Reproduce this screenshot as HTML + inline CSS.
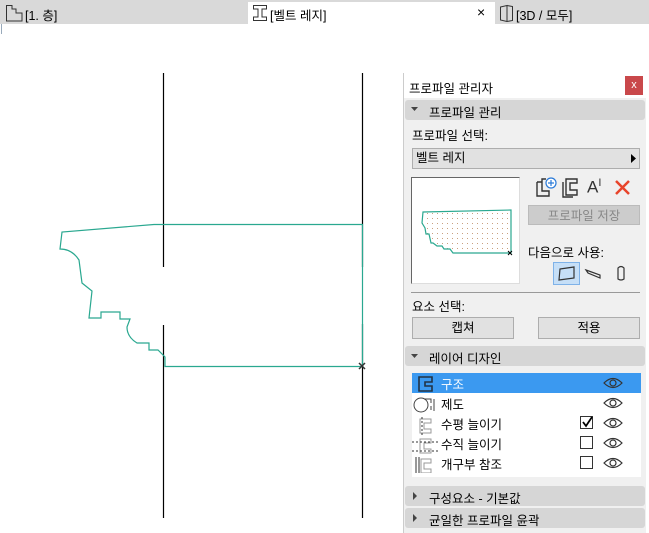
<!DOCTYPE html>
<html><head><meta charset="utf-8"><style>
*{margin:0;padding:0;box-sizing:border-box}
body{width:649px;height:533px;background:#fff;position:relative;overflow:hidden;font-family:"Liberation Sans","Noto Sans CJK KR",sans-serif;font-size:12.5px;color:#000}
.a{position:absolute}
.hdr{position:absolute;left:405px;width:240px;height:20px;background:#d6d6d6;border-radius:3px}
.hdr span{position:absolute;left:24px;top:2px}
.btn{position:absolute;background:#e1e1e1;border:1px solid #adadad;text-align:center;line-height:20px}
.row{position:absolute;left:412px;width:229px;height:20px}
.row span{position:absolute;left:29px;top:1px}
.cb{position:absolute;left:580px;width:13px;height:13px;border:1px solid #333;background:#fff}
</style></head><body>
<!-- tab bar -->
<div class="a" style="left:0;top:0;width:649px;height:24px;background:#d9d9d9"></div>
<div class="a" style="left:1px;top:24px;width:1px;height:10px;background:#9ab"></div>
<div class="a" style="left:248px;top:2px;width:247px;height:22px;background:#fff"></div>
<svg class="a" style="left:5px;top:4px" width="18" height="18"><path d="M1.5 1.5V17H17V9H11V5H7V1.5Z" fill="none" stroke="#333"/></svg>
<div class="a" style="left:25px;top:5px">[1. 층]</div>
<svg class="a" style="left:252px;top:4px" width="16" height="18"><path d="M1.5 1.5H14.5V5H10V13H14.5V16.5H1.5V13H6V5H1.5Z" fill="none" stroke="#333"/></svg>
<div class="a" style="left:270px;top:5px">[벨트 레지]</div>
<div class="a" style="left:477px;top:4px;font-size:14px">×</div>
<svg class="a" style="left:499px;top:4px" width="16" height="18"><path d="M1.5 3L8 1.5V17.5L1.5 16Z M8 1.5L13.5 2.5V16.5L8 17.5" fill="none" stroke="#333"/></svg>
<div class="a" style="left:516px;top:5px">[3D / 모두]</div>

<!-- drawing -->
<svg class="a" style="left:0;top:0" width="400" height="533">
<path d="M163.5 73V267M163.5 325V518M362.5 73V267M362.5 324V518" stroke="#000" stroke-width="1.2"/>
<path d="M163 224.5H362.5V366.5H165V357L158 350H149V343H137Q127 337 127 327L130 319H120V312H101V318H89L92 291L82 283L79 260Q72 249 60 249L62 232L154 224.5H163" fill="none" stroke="#2aa890" stroke-width="1.2"/>
<path d="M359 363l6 6M365 363l-6 6" stroke="#333" stroke-width="1.5"/>
</svg>

<!-- panel -->
<div class="a" style="left:403px;top:73px;width:243px;height:460px;background:#f0f0f0;border-left:1px solid #ccc"></div>
<div class="a" style="left:404px;top:73px;width:242px;height:25px;background:#fff"></div>
<div class="a" style="left:409px;top:78px">프로파일 관리자</div>
<div class="a" style="left:625px;top:76px;width:18px;height:19px;background:#c9484b;color:#fff;text-align:center;font-size:11px;line-height:18px">x</div>

<div class="hdr" style="top:100px"><span>프로파일 관리</span></div>
<svg class="a" style="left:411px;top:107px" width="8" height="6"><path d="M0 0H7L3.5 4Z" fill="#444"/></svg>
<div class="a" style="left:412px;top:125px">프로파일 선택:</div>
<div class="btn" style="left:412px;top:148px;width:228px;height:21px;text-align:left;padding-left:3px;line-height:18px">벨트 레지</div>
<svg class="a" style="left:631px;top:154px" width="6" height="9"><path d="M0 0L5 4.5L0 9Z" fill="#000"/></svg>

<div class="a" style="left:411px;top:177px;width:109px;height:107px;background:#fff;border:1px solid #666;border-right-color:#ddd;border-bottom-color:#ddd"></div>
<svg class="a" style="left:411px;top:177px" width="109" height="107">
<defs><pattern id="d" width="5" height="5" patternUnits="userSpaceOnUse"><rect x="1" y="1" width="1" height="1" fill="#c9a080"/></pattern></defs>
<path d="M12 35L100 33V76H42L39 72H33L31 69H26L22 66H20L18 57H15L14 51L11 46Z" fill="url(#d)" stroke="#2aa890" stroke-width="1.2"/>
<path d="M97 74l4 4M101 74l-4 4" stroke="#000"/>
</svg>
<svg class="a" style="left:535px;top:176px" width="24" height="22"><path d="M2 6H7V3H11M2 6V20H14V15H7V6" fill="none" stroke="#333" stroke-width="1.4"/><circle cx="16" cy="7" r="5" fill="#fff" stroke="#2a7ad8" stroke-width="1.2"/><path d="M16 4v6M13 7h6" stroke="#2a7ad8" stroke-width="1.2"/></svg>
<svg class="a" style="left:561px;top:177px" width="20" height="22"><path d="M5 2H16V6H9V13H16V18H5Z M2 5V20H12" fill="none" stroke="#333" stroke-width="1.4"/></svg>
<div class="a" style="left:587px;top:177px;font-size:17px;color:#333">A<sup style="font-size:11px">I</sup></div>
<svg class="a" style="left:614px;top:179px" width="17" height="17"><path d="M2 2L15 15M15 2L2 15" stroke="#e8442b" stroke-width="2.5"/></svg>
<div class="btn" style="left:528px;top:205px;width:112px;height:20px;background:#ccc;border-color:#bbb;color:#888">프로파일 저장</div>
<div class="a" style="left:528px;top:242px">다음으로 사용:</div>
<div class="a" style="left:553px;top:262px;width:27px;height:23px;background:#c6dff7;border:1px solid #7fb2e8"></div>
<svg class="a" style="left:553px;top:262px" width="90" height="23"><path d="M7 7L21 5V16L6 18Z" fill="none" stroke="#333" stroke-width="1.2"/><path d="M33 8L47 13V16L35 11Z" fill="none" stroke="#333" stroke-width="1.2"/><path d="M65 6V17Q68 19 71 17V6Q68 3 65 6Z" fill="none" stroke="#333" stroke-width="1.2"/></svg>
<div class="a" style="left:411px;top:292px;width:229px;height:1px;background:#999"></div>
<div class="a" style="left:412px;top:296px">요소 선택:</div>
<div class="btn" style="left:412px;top:317px;width:102px;height:22px">캡쳐</div>
<div class="btn" style="left:538px;top:317px;width:102px;height:22px">적용</div>

<div class="hdr" style="top:346px"><span>레이어 디자인</span></div>
<svg class="a" style="left:411px;top:354px" width="8" height="6"><path d="M0 0H7L3.5 4Z" fill="#444"/></svg>
<div class="a" style="left:412px;top:373px;width:229px;height:104px;background:#fff"></div>
<div class="row" style="top:373px;background:#3b99f0;color:#fff"><span>구조</span></div>
<div class="row" style="top:393px"><span>제도</span></div>
<div class="row" style="top:413px"><span>수평 늘이기</span></div>
<div class="row" style="top:433px"><span>수직 늘이기</span></div>
<div class="row" style="top:453px"><span>개구부 참조</span></div>
<svg class="a" style="left:412px;top:373px" width="30" height="100">
<path d="M7 4H20V9H13V13H20V18H7Z" fill="none" stroke="#234" stroke-width="1.6"/>
<circle cx="9" cy="32" r="7" fill="none" stroke="#444"/><path d="M12 26H19V30M19 37V33M22 26V38" fill="none" stroke="#444"/>
<path d="M8 46H19V50H12V56H19V60H8Z" fill="none" stroke="#999"/><path d="M10 44V62" stroke="#333" stroke-dasharray="2 2"/>
<path d="M8 66H19V70H12V76H19V80H8Z" fill="none" stroke="#999"/><path d="M0 69H28M0 78H28" stroke="#333" stroke-dasharray="2 2"/>
<path d="M9 86H19V90H12V96H19V100H9Z" fill="none" stroke="#999"/><path d="M4 84V100M7 84V100" stroke="#333"/>
</svg>
<svg class="a" style="left:602px;top:375px" width="22" height="100"><g fill="none" stroke="#333" stroke-width="1.2"><path d="M2 8Q11 -1 20 8Q11 17 2 8Z"/><circle cx="11" cy="8" r="3"/><path d="M2 28Q11 19 20 28Q11 37 2 28Z"/><circle cx="11" cy="28" r="3"/><path d="M2 48Q11 39 20 48Q11 57 2 48Z"/><circle cx="11" cy="48" r="3"/><path d="M2 68Q11 59 20 68Q11 77 2 68Z"/><circle cx="11" cy="68" r="3"/><path d="M2 88Q11 79 20 88Q11 97 2 88Z"/><circle cx="11" cy="88" r="3"/></g></svg>
<div class="cb" style="top:416px"></div>
<svg class="a" style="left:581px;top:416px" width="12" height="12"><path d="M2 6L5 10L11 1" fill="none" stroke="#000" stroke-width="1.8"/></svg>
<div class="cb" style="top:436px"></div>
<div class="cb" style="top:456px"></div>

<div class="hdr" style="top:486px"><span>구성요소 - 기본값</span></div>
<svg class="a" style="left:413px;top:492px" width="6" height="8"><path d="M0 0L4 4L0 8Z" fill="#444"/></svg>
<div class="hdr" style="top:508px"><span>균일한 프로파일 윤곽</span></div>
<svg class="a" style="left:413px;top:514px" width="6" height="8"><path d="M0 0L4 4L0 8Z" fill="#444"/></svg>
</body></html>
